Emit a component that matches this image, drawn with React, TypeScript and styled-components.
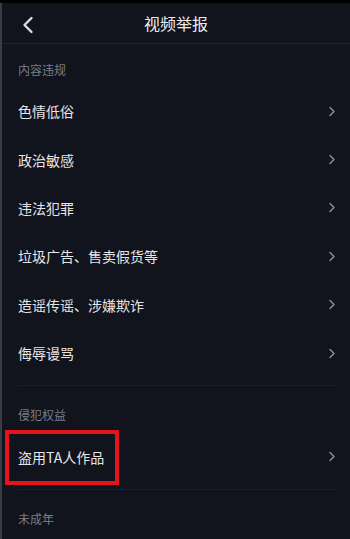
import React from "react";
import styled, { createGlobalStyle } from "styled-components";

const Global = createGlobalStyle`
  html, body {
    margin: 0;
    padding: 0;
    background: #000;
    font-family: "Noto Sans CJK SC", "Noto Sans", sans-serif;
  }
  * { box-sizing: border-box; }
`;

const Root = styled.div`
  padding-top: 3px;
  background: #000;
  min-height: 539px;
`;

const Screen = styled.div`
  background: #11131d;
  border-left: 2px solid #3a3c45;
  min-height: 536px;
  overflow: hidden;
`;

const Header = styled.header`
  position: relative;
  height: 41px;
  border-bottom: 1px solid #1f212b;
  display: flex;
  align-items: center;
  justify-content: center;
`;

const BackButton = styled.button`
  position: absolute;
  left: 17px;
  top: 12px;
  width: 18px;
  height: 20px;
  padding: 0;
  border: none;
  background: transparent;
  display: flex;
  align-items: center;
  justify-content: center;
`;

const Title = styled.h1`
  margin: 0;
  font-size: 16px;
  font-weight: 400;
  color: #ececee;
  line-height: 20px;
  letter-spacing: 0;
`;

const SectionLabel = styled.div`
  height: 43px;
  padding: 17px 0 0 16px;
  font-size: 12px;
  line-height: 17px;
  color: #7c7e86;
`;

const Row = styled.div`
  position: relative;
  height: 48.4px;
  display: flex;
  align-items: center;
  justify-content: space-between;
  padding: 0 14px 0 16px;
`;

const RowText = styled.span`
  font-size: 14px;
  line-height: 20px;
  color: #e6e6e9;
`;

const Divider = styled.div`
  height: 1px;
  margin: 8px 12px 3px 16px;
  background: #1e2029;
`;

const Highlight = styled.div`
  position: absolute;
  left: 3px;
  top: -2px;
  width: 114px;
  height: 55px;
  border: 4px solid #e5141b;
  pointer-events: none;
`;

const Chevron = () => (
  <svg width="8" height="11" viewBox="0 0 8 11">
    <path d="M2 1.5 L6 5.5 L2 9.5" fill="none" stroke="#8f9098" strokeWidth="1.4" strokeLinecap="round" strokeLinejoin="round" />
  </svg>
);

const BackIcon = () => (
  <svg width="14" height="18" viewBox="0 0 14 18">
    <path d="M10.5 2 L3.5 9 L10.5 16" fill="none" stroke="#dcdce0" strokeWidth="2.4" strokeLinecap="round" strokeLinejoin="round" />
  </svg>
);

type Item = { text: string; highlight?: boolean };
type Section = { title: string; items: Item[] };

const sections: Section[] = [
  {
    title: "内容违规",
    items: [
      { text: "色情低俗" },
      { text: "政治敏感" },
      { text: "违法犯罪" },
      { text: "垃圾广告、售卖假货等" },
      { text: "造谣传谣、涉嫌欺诈" },
      { text: "侮辱谩骂" },
    ],
  },
  {
    title: "侵犯权益",
    items: [{ text: "盗用TA人作品", highlight: true }],
  },
  { title: "未成年", items: [] },
];

export default function App() {
  return (
    <Root>
      <Global />
      <Screen>
        <Header>
          <BackButton aria-label="返回">
            <BackIcon />
          </BackButton>
          <Title>视频举报</Title>
        </Header>
        {sections.map((s, i) => (
          <React.Fragment key={s.title}>
            {i > 0 && <Divider />}
            <SectionLabel>{s.title}</SectionLabel>
            {s.items.map((it) => (
              <Row key={it.text}>
                <RowText>{it.text}</RowText>
                <Chevron />
                {it.highlight && <Highlight />}
              </Row>
            ))}
          </React.Fragment>
        ))}
      </Screen>
    </Root>
  );
}
